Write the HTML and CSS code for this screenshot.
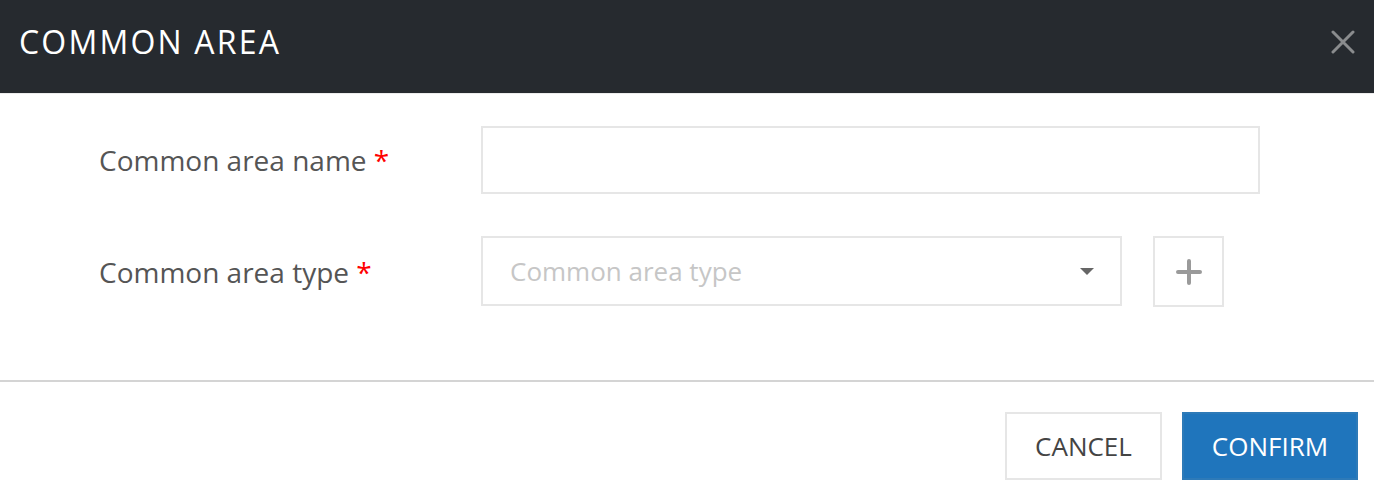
FILE: index.html
```html
<!DOCTYPE html>
<html>
<head>
<meta charset="utf-8">
<link rel="stylesheet" href="styles.css">
</head>
<body>
<div class="modal">
  <header class="modal-header">
    <h1 class="modal-title">COMMON AREA</h1>
    <button class="close-btn" aria-label="Close">
      <svg width="24" height="24" viewBox="0 0 24 24"><path d="M2 2 L22 22 M22 2 L2 22" stroke="#8a8c8e" stroke-width="3" stroke-linecap="round"/></svg>
    </button>
  </header>
  <section class="modal-body">
    <div class="form-row">
      <label class="form-label">Common area name <span class="req">*</span></label>
      <div class="field"><input class="text-input" type="text"></div>
    </div>
    <div class="form-row">
      <label class="form-label">Common area type <span class="req">*</span></label>
      <div class="field field-select">
        <div class="select">
          <span class="placeholder">Common area type</span>
          <svg class="caret" width="14" height="8" viewBox="0 0 14 8"><path d="M0 0 H14 L7 7 Z" fill="#666"/></svg>
        </div>
        <button class="add-btn" aria-label="Add">
          <svg width="26" height="26" viewBox="0 0 26 26"><path d="M13 2 V24 M2 13 H24" stroke="#9a9a9a" stroke-width="4" stroke-linecap="round"/></svg>
        </button>
      </div>
    </div>
  </section>
  <footer class="modal-footer">
    <button class="btn btn-cancel">CANCEL</button>
    <button class="btn btn-confirm">CONFIRM</button>
  </footer>
</div>
</body>
</html>
```

FILE: styles.css
```css
* { box-sizing: border-box; }
html, body { margin: 0; padding: 0; background: #fff; }
body { font-family: "Open Sans", "Liberation Sans", sans-serif; }

.modal-header {
  height: 94px;
  background: #262a2f;
  border-bottom: 1px solid #ececec;
  display: flex;
  align-items: center;
  justify-content: space-between;
  padding: 0 19px 10px 19px;
}
.modal-title {
  margin: 0;
  color: #fff;
  font-family: "Open Sans", "Liberation Sans", sans-serif;
  font-weight: 400;
  font-size: 32px;
  letter-spacing: 2.2px;
  line-height: 1;
}
.close-btn {
  background: none;
  border: 0;
  padding: 0;
  width: 24px;
  height: 24px;
  display: flex;
  margin-right: 0;
}

.modal-body {
  padding: 32px 0 73px 99px;
  display: flex;
  flex-direction: column;
  gap: 42px;
  border-bottom: 2px solid #d4d4d4;
}
.form-row {
  display: flex;
  align-items: center;
}
.form-label {
  width: 382px;
  color: #555;
  font-size: 28px;
  line-height: 1;
}
.req { color: #f00; }
.text-input {
  display: block;
  width: 779px;
  height: 68px;
  border: 2px solid #e6e6e6;
  outline: none;
  background: #fff;
}
.field-select {
  display: flex;
  gap: 31px;
}
.select {
  width: 641px;
  height: 70px;
  border: 2px solid #e6e6e6;
  display: flex;
  align-items: center;
  justify-content: space-between;
  padding: 0 26px 0 27px;
}
.placeholder {
  color: #c6c6c6;
  font-size: 26px;
}
.caret { margin-top: 1px; }
.add-btn {
  width: 71px;
  height: 71px;
  border: 2px solid #e6e6e6;
  background: #fff;
  display: flex;
  align-items: center;
  justify-content: center;
  padding: 0;
}

.modal-footer {
  display: flex;
  justify-content: flex-end;
  gap: 20px;
  padding: 30px 16px 20px 0;
}
.btn {
  height: 68px;
  font-family: "Open Sans", "Liberation Sans", sans-serif;
  font-size: 26px;
  padding: 0;
}
.btn-cancel {
  width: 157px;
  background: #fff;
  color: #444;
  border: 2px solid #e6e6e6;
}
.btn-confirm {
  width: 176px;
  background: #1f75bc;
  color: #fff;
  border: 2px solid #2d7ab8;
}
```
